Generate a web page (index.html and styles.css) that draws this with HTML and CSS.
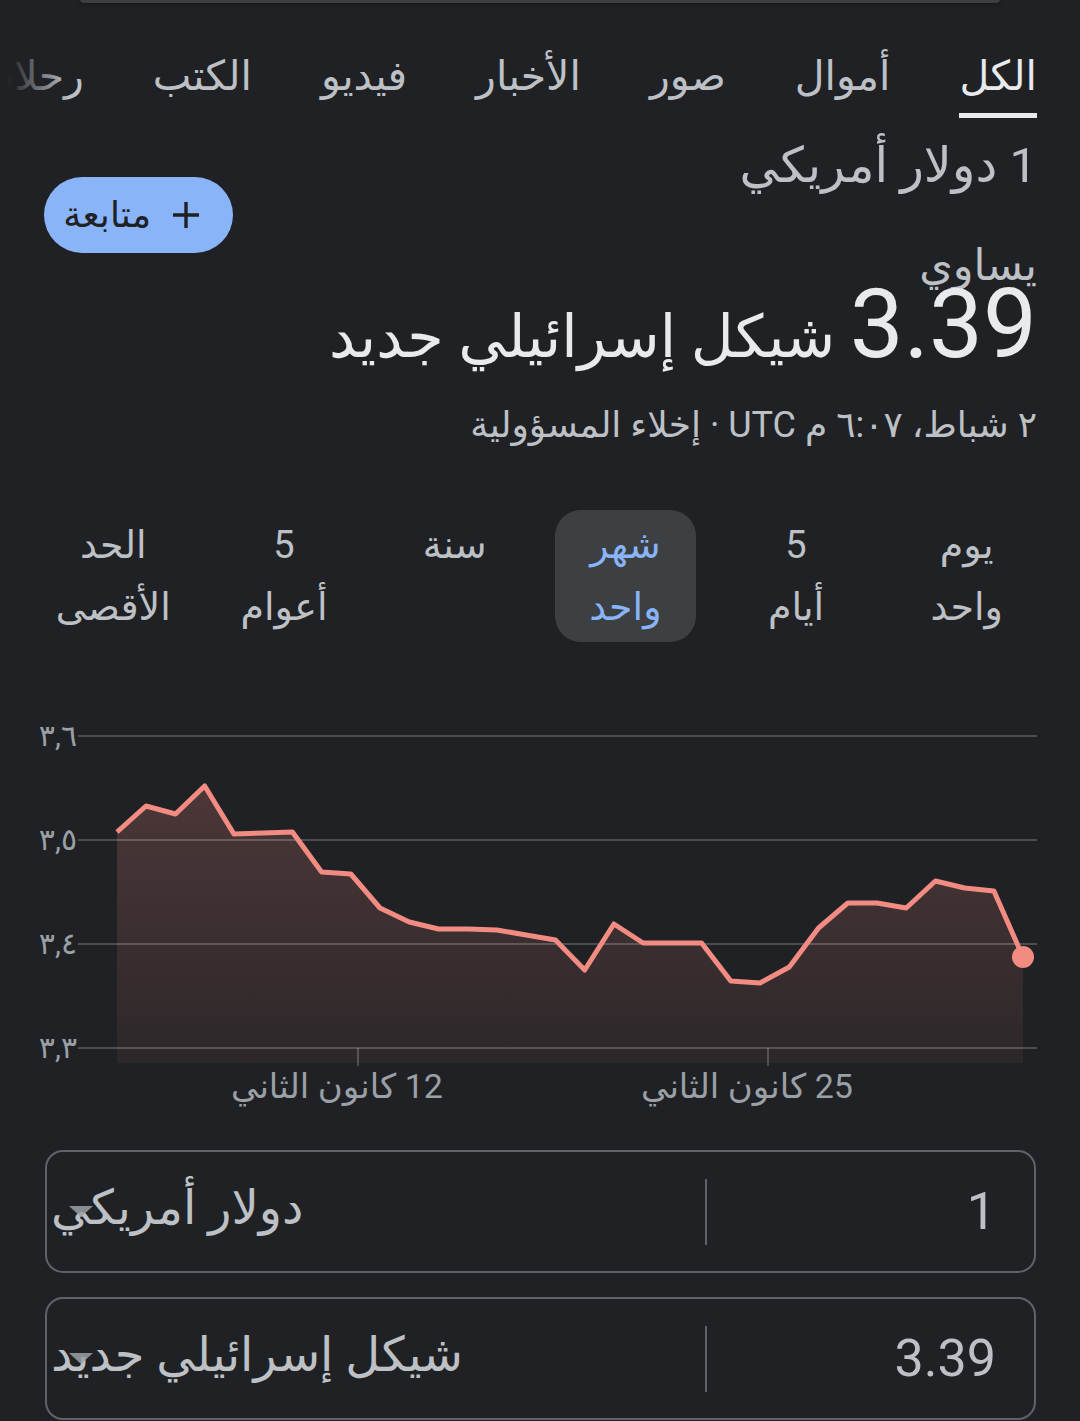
FILE: index.html
```html
<!DOCTYPE html>
<html lang="ar" dir="rtl">
<head>
    <meta charset="UTF-8">
    <meta name="viewport" content="width=device-width, initial-scale=1.0">
    <title>دولار أمريكي إلى شيكل إسرائيلي جديد</title>
    <link rel="stylesheet" href="styles.css">
</head>
<body>
    <div class="search-edge"></div>

    <nav class="tabs">
        <a class="tab active">الكل</a>
        <a class="tab">أموال</a>
        <a class="tab">صور</a>
        <a class="tab">الأخبار</a>
        <a class="tab">فيديو</a>
        <a class="tab">الكتب</a>
        <a class="tab">رحلات</a>
    </nav>

    <div class="result">
        <div class="summary">
            <div class="from">1 دولار أمريكي</div>
            <button class="follow">
                <svg width="30" height="30" viewBox="0 0 30 30"><path d="M15 2v26M2 15h26" stroke="#202124" stroke-width="3.4" fill="none"/></svg>
                <span>متابعة</span>
            </button>
        </div>
        <div class="equals">يساوي</div>
        <div class="to"><span class="value">3.39</span> شيكل إسرائيلي جديد</div>
        <div class="meta">٢ شباط، ٦:٠٧ م UTC · إخلاء المسؤولية</div>
    </div>

    <div class="ranges">
        <div class="range">يوم<br>واحد</div>
        <div class="range">5<br>أيام</div>
        <div class="range selected">شهر<br>واحد</div>
        <div class="range">سنة</div>
        <div class="range">5<br>أعوام</div>
        <div class="range">الحد<br>الأقصى</div>
    </div>

    <div class="chart">
        <svg width="1080" height="420" viewBox="0 0 1080 420">
            <defs>
                <linearGradient id="area" x1="0" y1="85" x2="0" y2="362" gradientUnits="userSpaceOnUse">
                    <stop offset="0" stop-color="#f28b82" stop-opacity="0.21"/>
                    <stop offset="1" stop-color="#f28b82" stop-opacity="0.06"/>
                </linearGradient>
            </defs>
            <polygon fill="url(#area)" points="117,131 146,105 175.5,113 204.7,85 233.9,133 263.2,132 292.4,131 321.6,171 350.8,173 380,207 409.3,221 438.5,228 467.8,228 497,229 526.2,234 555.5,239 584.7,269 613.9,223 643.1,242 672.4,242 701.6,242 730.8,280 760,282 789.3,266 818.5,227 847.8,202 877,202 906.2,207 935.4,180 964.7,187 993.9,190 1023,256 1023,362 117,362"/>
            <g class="grid">
                <line x1="78" y1="35" x2="1037" y2="35"/>
                <line x1="78" y1="139" x2="1037" y2="139"/>
                <line x1="78" y1="243" x2="1037" y2="243"/>
                <line x1="78" y1="347" x2="1037" y2="347"/>
                <line x1="358" y1="347" x2="358" y2="365"/>
                <line x1="768" y1="347" x2="768" y2="365"/>
            </g>
            <g class="ylabels">
                <text x="77" y="45">٣,٦</text>
                <text x="77" y="149">٣,٥</text>
                <text x="77" y="253">٣,٤</text>
                <text x="77" y="357">٣,٣</text>
            </g>
            <g class="xlabels">
                <text x="337" y="397">12 كانون الثاني</text>
                <text x="747" y="397">25 كانون الثاني</text>
            </g>
            <polyline class="line" points="117,131 146,105 175.5,113 204.7,85 233.9,133 263.2,132 292.4,131 321.6,171 350.8,173 380,207 409.3,221 438.5,228 467.8,228 497,229 526.2,234 555.5,239 584.7,269 613.9,223 643.1,242 672.4,242 701.6,242 730.8,280 760,282 789.3,266 818.5,227 847.8,202 877,202 906.2,207 935.4,180 964.7,187 993.9,190 1023,256"/>
            <circle cx="1023" cy="256" r="11" fill="#f28b82"/>
        </svg>
    </div>

    <div class="converter">
        <div class="conv-box">
            <div class="amount">1</div>
            <div class="divider"></div>
            <div class="unit">دولار أمريكي<span class="caret"></span></div>
        </div>
        <div class="conv-box">
            <div class="amount">3.39</div>
            <div class="divider"></div>
            <div class="unit">شيكل إسرائيلي جديد<span class="caret"></span></div>
        </div>
    </div>
</body>
</html>
```

FILE: styles.css
```css
body {
    margin: 0;
    background-color: #202124;
    color: #bdc1c6;
    font-family: Roboto, "Noto Sans", "DejaVu Sans", sans-serif;
    direction: rtl;
    overflow: hidden;
}

/* bottom edge of the search box above */
.search-edge {
    height: 4px;
    margin: -1px 80px 0;
    background-color: #3c4043;
    border-radius: 0 0 16px 16px;
    box-shadow: 0 1px 3px rgba(0, 0, 0, 0.4);
}

.tabs {
    position: relative;
    display: flex;
    gap: 69px;
    padding: 43px 43px 0 0;
    white-space: nowrap;
    overflow: hidden;
}
.tabs::after {
    content: "";
    position: absolute;
    left: 0;
    top: 0;
    bottom: 0;
    width: 70px;
    background: linear-gradient(to right, #202124 10%, rgba(32, 33, 36, 0));
}
.tab {
    font-size: 41px;
    line-height: 60px;
    padding-bottom: 7px;
    border-bottom: 5px solid transparent;
    color: #bdc1c6;
}
.tab.active {
    color: #e8eaed;
    border-bottom-color: #e8eaed;
}

.result {
    padding: 0 43px 0 44px;
}
.summary {
    display: flex;
    justify-content: space-between;
    align-items: flex-start;
    margin-top: 18px;
}
.from {
    font-size: 49px;
    line-height: 60px;
}
.follow {
    display: flex;
    align-items: center;
    gap: 20px;
    margin-top: 41px;
    width: 189px;
    height: 76px;
    padding: 0 32px 0 18px;
    border: none;
    border-radius: 38px;
    background-color: #8ab4f8;
    color: #202124;
    font-family: inherit;
    font-size: 36px;
}
.equals {
    margin-top: -13px;
    font-size: 43px;
    line-height: 50px;
}
.to {
    margin-top: -14px;
    color: #e8eaed;
    font-size: 59px;
    line-height: 96px;
}
.value {
    font-size: 96px;
}
.meta {
    margin-top: 15px;
    font-size: 36px;
    line-height: 50px;
}

.ranges {
    display: grid;
    grid-template-columns: repeat(6, 1fr);
    padding: 0 28px;
    margin-top: 60px;
}
.range {
    justify-self: center;
    width: 141px;
    padding: 4px 0;
    border-radius: 26px;
    text-align: center;
    font-size: 38px;
    line-height: 62px;
    color: #bdc1c6;
}
.range.selected {
    background-color: #3c4043;
    color: #8ab4f8;
}

.chart {
    margin-top: 59px;
    height: 420px;
}
.chart svg {
    display: block;
}
.grid line {
    stroke: rgba(255, 255, 255, 0.2);
    stroke-width: 2;
}
.ylabels text {
    fill: #9aa0a6;
    font-size: 30px;
    text-anchor: end;
    direction: ltr;
}
.xlabels text {
    fill: #9aa0a6;
    font-size: 34px;
    text-anchor: middle;
}
.line {
    fill: none;
    stroke: #f28b82;
    stroke-width: 5;
    stroke-linejoin: round;
}

.converter {
    display: flex;
    flex-direction: column;
    gap: 24px;
    padding: 0 44px 0 45px;
    margin-top: 29px;
}
.conv-box {
    display: flex;
    align-items: center;
    height: 119px;
    border: 2px solid #5f6368;
    border-radius: 18px;
    color: #bdc1c6;
}
.amount {
    width: 289px;
    padding-right: 38px;
    font-size: 52px;
}
.divider {
    width: 2px;
    height: 66px;
    background-color: #5f6368;
}
.unit {
    position: relative;
    flex: 1;
    text-align: left;
    padding: 0 0 8px 4px;
    font-size: 48px;
}
.caret {
    position: absolute;
    left: 22px;
    top: 50%;
    margin-top: -6px;
    border-left: 12px solid transparent;
    border-right: 12px solid transparent;
    border-top: 11px solid rgba(154, 160, 166, 0.85);
}
```
